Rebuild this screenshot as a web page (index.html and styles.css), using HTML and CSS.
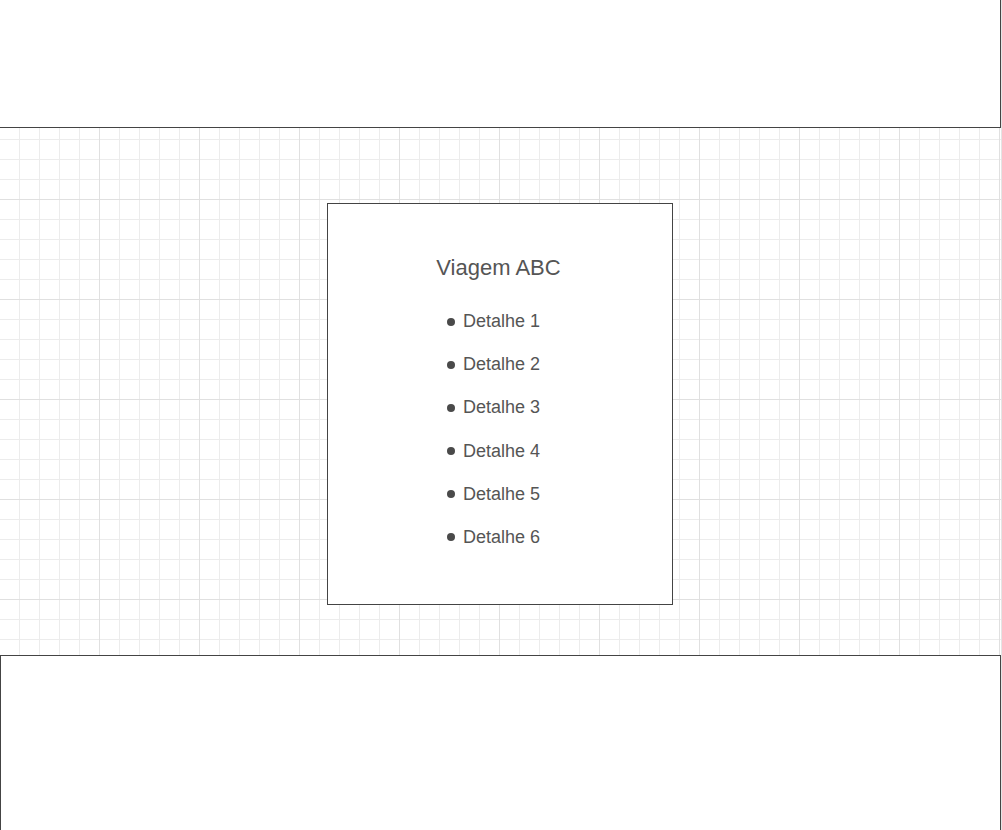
FILE: index.html
```html
<!DOCTYPE html>
<html lang="pt">
<head>
<meta charset="utf-8">
<title>Viagem ABC</title>
<link rel="stylesheet" href="styles.css">
</head>
<body>
<div class="page">
  <header class="top-bar"></header>
  <main class="canvas">
    <section class="card">
      <h1 class="card-title">Viagem ABC</h1>
      <ul class="details">
        <li class="detail">Detalhe 1</li>
        <li class="detail">Detalhe 2</li>
        <li class="detail">Detalhe 3</li>
        <li class="detail">Detalhe 4</li>
        <li class="detail">Detalhe 5</li>
        <li class="detail">Detalhe 6</li>
      </ul>
    </section>
  </main>
  <footer class="bottom-bar"></footer>
</div>
</body>
</html>
```
FILE: styles.css
```css
html, body {
  margin: 0;
  padding: 0;
  overflow: hidden;
  background: #ffffff;
}

.page {
  width: 1002px;
  height: 830px;
  box-sizing: border-box;
  border-right: 1px solid #e4e4e4;
  font-family: "Liberation Sans", Arial, sans-serif;
  color: #555555;
  background-color: #ffffff;
  background-image:
    linear-gradient(to right, transparent 99px, #e0e0e0 99px),
    linear-gradient(to bottom, transparent 99px, #e0e0e0 99px),
    linear-gradient(to right, transparent 19px, #ececec 19px),
    linear-gradient(to bottom, transparent 19px, #ececec 19px);
  background-size: 100px 100px, 100px 100px, 20px 20px, 20px 20px;
  background-position: 0 0;
  display: flex;
  flex-direction: column;
}

.top-bar {
  width: 1001px;
  height: 128px;
  flex: none;
  box-sizing: border-box;
  background: #ffffff;
  border-right: 1px solid #444444;
  border-bottom: 1px solid #444444;
}

.canvas {
  width: 1001px;
  height: 527px;
  flex: none;
  display: flex;
  justify-content: flex-start;
  align-items: flex-start;
}

.card {
  margin: 75px 0 0 327px;
  width: 346px;
  height: 402px;
  box-sizing: border-box;
  background: #ffffff;
  border: 1px solid #444444;
  padding-top: 51px;
  text-align: center;
}

.card-title {
  margin: 0;
  padding-right: 3px;
  font-size: 22px;
  line-height: 26px;
  font-weight: normal;
  color: #555555;
}

.details {
  list-style: none;
  margin: 30px 0 0 0;
  padding: 0;
  display: flex;
  flex-direction: column;
  gap: 22.2px;
}

.detail {
  font-size: 18px;
  line-height: 21px;
  padding-left: 3px;
  color: #555555;
}

.detail::before {
  content: "";
  display: inline-block;
  width: 8px;
  height: 8px;
  border-radius: 50%;
  background: #4a4a4a;
  margin-left: -16px;
  margin-right: 8px;
  vertical-align: 1.5px;
}

.bottom-bar {
  width: 1001px;
  height: 200px;
  flex: none;
  box-sizing: border-box;
  background: #ffffff;
  border-top: 1px solid #444444;
  border-left: 1px solid #444444;
  border-right: 1px solid #444444;
}
```
